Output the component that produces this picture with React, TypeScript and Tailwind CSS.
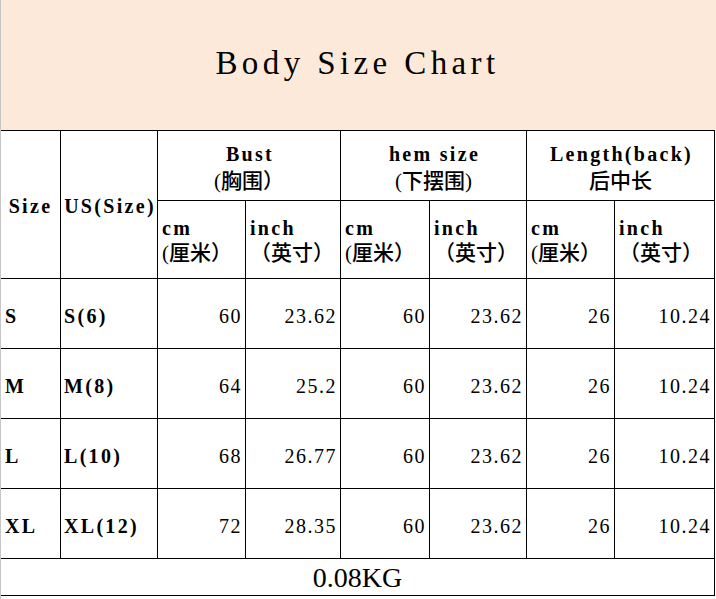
import { Fragment } from 'react';

const serif = "font-['Liberation_Serif','Noto_Sans_CJK_SC',serif]";
const cell = 'border-r border-b border-black';

const groups = [
  { en: 'Bust', zh: '(胸围）' },
  { en: 'hem size', zh: '(下摆围)' },
  { en: 'Length(back)', zh: '后中长' },
];

const rows = [
  ['S', 'S(6)', '60', '23.62', '60', '23.62', '26', '10.24'],
  ['M', 'M(8)', '64', '25.2', '60', '23.62', '26', '10.24'],
  ['L', 'L(10)', '68', '26.77', '60', '23.62', '26', '10.24'],
  ['XL', 'XL(12)', '72', '28.35', '60', '23.62', '26', '10.24'],
];

export default function App() {
  return (
    <div className={`w-[716px] h-[599px] bg-white border-l border-[#c6c6c6] text-black ${serif}`}>
      {/* Title band */}
      <div className="h-[130px] bg-[#fde9d9] flex items-center justify-center pb-[2px] pr-[2px]">
        <h1 className="text-[33px] tracking-[4.4px] font-normal">Body Size Chart</h1>
      </div>

      {/* Chart */}
      <div className="w-[714px] grid grid-cols-[60px_97px_88px_95px_89px_97px_88px_100px] grid-rows-[70px_78px_70px_70px_70px_70px_37px] border-t border-black">
        <div className={`${cell} row-span-2 flex items-center justify-center pt-[3px] text-[20px] font-bold tracking-[2.3px]`}>
          Size
        </div>
        <div className={`${cell} row-span-2 flex items-center justify-center pt-[3px] text-[20px] font-bold tracking-[2.3px] pl-[2px]`}>
          US(Size)
        </div>
        {groups.map((g) => (
          <div key={g.en} className={`${cell} col-span-2 flex flex-col items-center justify-center pt-[4px] leading-[27px]`}>
            <span className="text-[20px] font-bold tracking-[2.3px] pl-[2px]">{g.en}</span>
            <span className="text-[21px] font-medium">{g.zh}</span>
          </div>
        ))}

        {[0, 1, 2].map((i) => (
          <Fragment key={i}>
            <div className={`${cell} flex flex-col justify-center pl-[4px] pt-[3px] leading-[25px]`}>
              <span className="text-[20px] font-bold tracking-[2.3px]">cm</span>
              <span className="text-[21px] font-medium">(厘米）</span>
            </div>
            <div className={`${cell} flex flex-col justify-center pl-[4px] pt-[3px] leading-[25px]`}>
              <span className="text-[20px] font-bold tracking-[2.3px]">inch</span>
              <span className="text-[21px] font-medium">（英寸）</span>
            </div>
          </Fragment>
        ))}

        {rows.map((r) =>
          r.map((v, j) =>
            j < 2 ? (
              <div
                key={`${r[0]}-${j}`}
                className={`${cell} flex items-center pt-[5px] text-[20px] font-bold tracking-[2.3px] ${j === 0 ? 'pl-[4px]' : 'pl-[3px]'}`}
              >
                {v}
              </div>
            ) : (
              <div
                key={`${r[0]}-${j}`}
                className={`${cell} flex items-center justify-end pt-[5px] pr-[3px] text-[20px] tracking-[1.5px]`}
              >
                {v}
              </div>
            )
          )
        )}

        <div className={`${cell} col-span-8 flex items-center justify-center pt-[1px] text-[28px]`}>0.08KG</div>
      </div>
    </div>
  );
}
